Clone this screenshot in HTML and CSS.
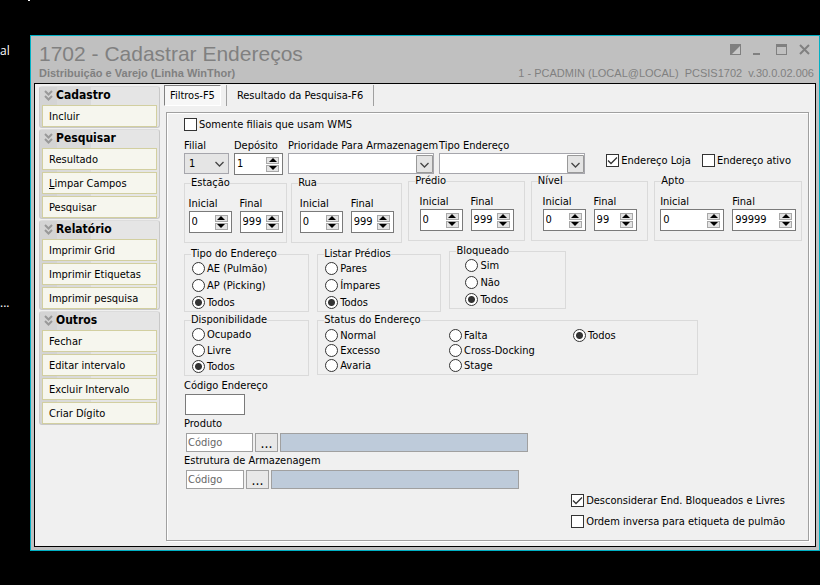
FILE: index.html
```html
<!DOCTYPE html>
<html lang="pt-BR">
<head>
  <meta charset="UTF-8" />
  <meta name="viewport" content="width=device-width, initial-scale=1.0"/>
  <title>1702 - Cadastrar Endereços</title>
  <link rel="stylesheet" href="styles.css">
</head>
<body>
  <!-- Desktop icon captions behind the window -->
  <span class="desktop-mark"></span>
  <span class="desktop-label label-top">al</span>
  <span class="desktop-label label-mid">...</span>

  <div class="window">
    <header class="titlebar">
      <div class="title-row">
        <h1>1702 - Cadastrar Endereços</h1>
        <div class="window-buttons">
          <button type="button" aria-label="Tema"><svg width="11" height="11" viewBox="0 0 11 11"><path d="M0 0H11V11H0Z" fill="#808080"/><path d="M10 2V10H2Z" fill="#c8c8c8"/></svg></button>
          <button type="button" aria-label="Minimizar"><svg width="11" height="11" viewBox="0 0 11 11"><path d="M0 9H7V11H0Z" fill="#808080"/></svg></button>
          <button type="button" aria-label="Maximizar"><svg width="11" height="11" viewBox="0 0 11 11"><path d="M0 0H11V11H0ZM1 3V10H10V3Z" fill="#808080" fill-rule="evenodd"/></svg></button>
          <button type="button" aria-label="Fechar janela"><svg width="11" height="11" viewBox="0 0 11 11"><path d="M1 1L10 10M10 1L1 10" stroke="#808080" stroke-width="2"/></svg></button>
        </div>
      </div>
      <div class="info-row">
        <strong>Distribuição e Varejo (Linha WinThor)</strong>
        <div class="session">
          <span>1 - PCADMIN (LOCAL@LOCAL)</span>
          <span>PCSIS1702</span>
          <span>v.30.0.02.006</span>
        </div>
      </div>
    </header>

    <div class="client">
      <nav class="sidebar">
        <section class="menu-group">
          <h2><svg width="9" height="11" viewBox="0 0 9 11"><path d="M1 1L4.500 4.500L8 1M1 6L4.500 9.500L8 6"/></svg>Cadastro</h2>
          <button type="button">Incluir</button>
        </section>
        <section class="menu-group">
          <h2><svg width="9" height="11" viewBox="0 0 9 11"><path d="M1 1L4.500 4.500L8 1M1 6L4.500 9.500L8 6"/></svg>Pesquisar</h2>
          <button type="button">Resultado</button>
          <button type="button"><u>L</u>impar Campos</button>
          <button type="button">Pesquisar</button>
        </section>
        <section class="menu-group">
          <h2><svg width="9" height="11" viewBox="0 0 9 11"><path d="M1 1L4.500 4.500L8 1M1 6L4.500 9.500L8 6"/></svg>Relatório</h2>
          <button type="button">Imprimir Grid</button>
          <button type="button">Imprimir Etiquetas</button>
          <button type="button">Imprimir pesquisa</button>
        </section>
        <section class="menu-group">
          <h2><svg width="9" height="11" viewBox="0 0 9 11"><path d="M1 1L4.500 4.500L8 1M1 6L4.500 9.500L8 6"/></svg>Outros</h2>
          <button type="button">Fechar</button>
          <button type="button">Editar intervalo</button>
          <button type="button">Excluir Intervalo</button>
          <button type="button">Criar Dígito</button>
        </section>
      </nav>

      <main class="content">
        <div class="tabs">
          <button type="button" class="tab active">Filtros-F5</button>
          <button type="button" class="tab">Resultado da Pesquisa-F6</button>
        </div>

        <form class="pane">
          <label class="option"><input type="checkbox">Somente filiais que usam WMS</label>

          <div class="top-row">
            <div class="field filial">
              <label for="filial">Filial</label>
              <select id="filial" class="flat"><option>1</option></select>
            </div>
            <div class="field deposito">
              <label for="deposito">Depósito</label>
              <div class="spin">
                <input type="text" id="deposito" value="1">
                <span class="arrows"><button type="button" class="up" aria-label="Aumentar"></button><button type="button" class="down" aria-label="Diminuir"></button></span>
              </div>
            </div>
            <div class="field combo">
              <label for="prioridade">Prioridade Para Armazenagem</label>
              <select id="prioridade"><option></option></select>
            </div>
            <div class="field combo">
              <label for="tipo">Tipo Endereço</label>
              <select id="tipo"><option></option></select>
            </div>
            <div class="top-checks">
              <label class="option"><input type="checkbox" checked>Endereço Loja</label>
              <label class="option"><input type="checkbox">Endereço ativo</label>
            </div>
          </div>

          <div class="ranges">
            <div class="range-set places">
              <fieldset class="range">
                <legend>Estação</legend>
                <div class="field">
                  <label for="estacao-ini">Inicial</label>
                  <div class="spin">
                    <input type="text" id="estacao-ini" value="0">
                    <span class="arrows"><button type="button" class="up" aria-label="Aumentar"></button><button type="button" class="down" aria-label="Diminuir"></button></span>
                  </div>
                </div>
                <div class="field">
                  <label for="estacao-fim">Final</label>
                  <div class="spin">
                    <input type="text" id="estacao-fim" value="999">
                    <span class="arrows"><button type="button" class="up" aria-label="Aumentar"></button><button type="button" class="down" aria-label="Diminuir"></button></span>
                  </div>
                </div>
              </fieldset>
              <fieldset class="range">
                <legend>Rua</legend>
                <div class="field">
                  <label for="rua-ini">Inicial</label>
                  <div class="spin">
                    <input type="text" id="rua-ini" value="0">
                    <span class="arrows"><button type="button" class="up" aria-label="Aumentar"></button><button type="button" class="down" aria-label="Diminuir"></button></span>
                  </div>
                </div>
                <div class="field">
                  <label for="rua-fim">Final</label>
                  <div class="spin">
                    <input type="text" id="rua-fim" value="999">
                    <span class="arrows"><button type="button" class="up" aria-label="Aumentar"></button><button type="button" class="down" aria-label="Diminuir"></button></span>
                  </div>
                </div>
              </fieldset>
            </div>
            <div class="range-set levels">
              <fieldset class="range">
                <legend>Prédio</legend>
                <div class="field">
                  <label for="predio-ini">Inicial</label>
                  <div class="spin">
                    <input type="text" id="predio-ini" value="0">
                    <span class="arrows"><button type="button" class="up" aria-label="Aumentar"></button><button type="button" class="down" aria-label="Diminuir"></button></span>
                  </div>
                </div>
                <div class="field">
                  <label for="predio-fim">Final</label>
                  <div class="spin">
                    <input type="text" id="predio-fim" value="999">
                    <span class="arrows"><button type="button" class="up" aria-label="Aumentar"></button><button type="button" class="down" aria-label="Diminuir"></button></span>
                  </div>
                </div>
              </fieldset>
              <fieldset class="range">
                <legend>Nível</legend>
                <div class="field">
                  <label for="nivel-ini">Inicial</label>
                  <div class="spin">
                    <input type="text" id="nivel-ini" value="0">
                    <span class="arrows"><button type="button" class="up" aria-label="Aumentar"></button><button type="button" class="down" aria-label="Diminuir"></button></span>
                  </div>
                </div>
                <div class="field">
                  <label for="nivel-fim">Final</label>
                  <div class="spin">
                    <input type="text" id="nivel-fim" value="99">
                    <span class="arrows"><button type="button" class="up" aria-label="Aumentar"></button><button type="button" class="down" aria-label="Diminuir"></button></span>
                  </div>
                </div>
              </fieldset>
              <fieldset class="range wide">
                <legend>Apto</legend>
                <div class="field">
                  <label for="apto-ini">Inicial</label>
                  <div class="spin">
                    <input type="text" id="apto-ini" value="0">
                    <span class="arrows"><button type="button" class="up" aria-label="Aumentar"></button><button type="button" class="down" aria-label="Diminuir"></button></span>
                  </div>
                </div>
                <div class="field">
                  <label for="apto-fim">Final</label>
                  <div class="spin">
                    <input type="text" id="apto-fim" value="99999">
                    <span class="arrows"><button type="button" class="up" aria-label="Aumentar"></button><button type="button" class="down" aria-label="Diminuir"></button></span>
                  </div>
                </div>
              </fieldset>
            </div>
          </div>

          <div class="kinds">
            <fieldset class="choices low">
              <legend>Tipo do Endereço</legend>
              <label class="option"><input type="radio" name="tipo-end">AE (Pulmão)</label>
              <label class="option"><input type="radio" name="tipo-end">AP (Picking)</label>
              <label class="option"><input type="radio" name="tipo-end" checked>Todos</label>
            </fieldset>
            <fieldset class="choices low">
              <legend>Listar Prédios</legend>
              <label class="option"><input type="radio" name="predios">Pares</label>
              <label class="option"><input type="radio" name="predios">Ímpares</label>
              <label class="option"><input type="radio" name="predios" checked>Todos</label>
            </fieldset>
            <fieldset class="choices indented">
              <legend>Bloqueado</legend>
              <label class="option"><input type="radio" name="bloqueado">Sim</label>
              <label class="option"><input type="radio" name="bloqueado">Não</label>
              <label class="option"><input type="radio" name="bloqueado" checked>Todos</label>
            </fieldset>
          </div>

          <div class="states">
            <fieldset class="choices tight">
              <legend>Disponibilidade</legend>
              <label class="option"><input type="radio" name="disp">Ocupado</label>
              <label class="option"><input type="radio" name="disp">Livre</label>
              <label class="option"><input type="radio" name="disp" checked>Todos</label>
            </fieldset>
            <fieldset class="choices status">
              <legend>Status do Endereço</legend>
              <label class="option"><input type="radio" name="status">Normal</label>
              <label class="option"><input type="radio" name="status">Excesso</label>
              <label class="option"><input type="radio" name="status">Avaria</label>
              <label class="option"><input type="radio" name="status">Falta</label>
              <label class="option"><input type="radio" name="status">Cross-Docking</label>
              <label class="option"><input type="radio" name="status">Stage</label>
              <label class="option"><input type="radio" name="status" checked>Todos</label>
            </fieldset>
          </div>

          <div class="lookups">
            <label for="codigo">Código Endereço</label>
            <input type="text" id="codigo" class="code">
            <label for="produto">Produto</label>
            <div class="lookup product">
              <input type="text" id="produto" placeholder="Código">
              <button type="button">...</button>
              <output for="produto"></output>
            </div>
            <label for="estrutura">Estrutura de Armazenagem</label>
            <div class="lookup structure">
              <input type="text" id="estrutura" placeholder="Código">
              <button type="button">...</button>
              <output for="estrutura"></output>
            </div>
          </div>

          <div class="bottom-checks">
            <label class="option"><input type="checkbox" checked>Desconsiderar End. Bloqueados e Livres</label>
            <label class="option"><input type="checkbox">Ordem inversa para etiqueta de pulmão</label>
          </div>
        </form>
      </main>
    </div>
  </div>
</body>
</html>
```

FILE: styles.css
```css
* {
  margin: 0;
  padding: 0;
  box-sizing: border-box;
}

body {
  display: flex;
  min-height: 100vh;
  padding: 35px 0 34px 30px;
  background-color: #000;
  color: #000;
  font-family: "DejaVu Sans Condensed", "Noto Sans", sans-serif;
  font-size: 11px;
  line-height: 14px;
}

button,
input,
select {
  font: inherit;
  color: inherit;
}

/* Desktop */
.desktop-label {
  position: absolute;
  left: 0;
  color: #fff;
  font-family: "Open Sans", sans-serif;
  font-size: 12px;
}

.label-top {
  top: 44px;
}

.label-mid {
  top: 296px;
}

.desktop-mark {
  position: absolute;
  left: 28px;
  top: 0;
  width: 2px;
  height: 1px;
  background-color: #fff;
}

/* Window */
.window {
  flex: 1;
  display: flex;
  flex-direction: column;
  padding: 0 3px 3px;
  background-color: #c0c0c0;
  border: 1px solid #00b0c4;
}

.titlebar {
  padding: 5px 2px 3px 5px;
  color: #808080;
  font-family: "Liberation Sans", Arial, sans-serif;
}

.title-row,
.info-row {
  display: flex;
  justify-content: space-between;
}

.title-row h1 {
  font-size: 21px;
  font-weight: normal;
  line-height: 25px;
}

.window-buttons {
  display: flex;
  gap: 12px;
  padding: 3px 4px 0 0;
}

.window-buttons button {
  height: 11px;
  background: none;
  border: none;
}

.window-buttons svg {
  display: block;
}

.session {
  display: flex;
  gap: 6px;
}

.client {
  flex: 1;
  display: flex;
  background-color: #f0f0f0;
  border: 1px solid #000;
}

/* Sidebar */
.sidebar {
  display: flex;
  flex-direction: column;
  gap: 1px;
  width: 125px;
  padding: 2px 0 2px 4px;
}

.menu-group {
  display: flex;
  flex-direction: column;
  gap: 2px;
  padding: 0 2px;
  background: linear-gradient(to right, #d4d4d4 17px, #dadada 17px, #dadada 51px, #e5e5e5 51px);
  border: 1px solid #c8c8c8;
  border-top-color: #dcdcdc;
  border-radius: 3px;
}

.menu-group h2 {
  display: flex;
  align-items: center;
  gap: 3px;
  height: 16px;
  padding-left: 2px;
  font-size: 12px;
  font-weight: bold;
}

.menu-group h2 svg {
  fill: none;
  stroke: #999;
  stroke-width: 2;
}

.menu-group button {
  height: 22px;
  padding: 1px 0 0 6px;
  background-color: #f6f6ee;
  border: 1px solid #d2cfa0;
  text-align: left;
}

/* Tabs */
.content {
  flex: 1;
  display: flex;
  flex-direction: column;
  padding: 1px 6px 5px 4px;
}

.tabs {
  display: flex;
  height: 21px;
}

.tab {
  padding: 1px 10px 0;
  background: none;
  border: none;
  border-right: 1px solid #a0a0a0;
}

.tab.active {
  padding: 1px 5px 0;
  margin-right: 5px;
  background-color: #f7f7f7;
  border: 1px solid #808080;
  border-right-color: #fff;
  border-bottom-color: #fff;
}

.tab.active + .tab {
  border-left: 1px solid #a0a0a0;
}

.pane {
  flex: 1;
  display: flex;
  flex-direction: column;
  margin: 6px 0 0 2px;
  padding: 5px 6px 12px 17px;
  border: 1px solid #a0a0a0;
  box-shadow: inset 1px 1px #fff, 1px 1px #fff;
}

/* Check boxes and radios */
.option {
  display: flex;
  align-items: center;
  gap: 2px;
  height: 13px;
  white-space: nowrap;
}

.option input {
  flex: none;
  appearance: none;
  width: 13px;
  height: 13px;
  background: #fff center no-repeat;
  border: 1px solid #333;
}

.option input[type="checkbox"]:checked {
  background-image: url("data:image/svg+xml,%3Csvg xmlns='http://www.w3.org/2000/svg' width='11' height='11'%3E%3Cpath d='M1 5.500L4 8.500L10 2.500' fill='none' stroke='%23333' stroke-width='1.300'/%3E%3C/svg%3E");
}

.option input[type="radio"] {
  border-radius: 50%;
}

.option input[type="radio"]:checked {
  background-image: radial-gradient(circle, #333 3px, transparent 4px);
}

/* Fields */
.field {
  display: flex;
  flex-direction: column;
}

.field label {
  white-space: nowrap;
}

select {
  appearance: none;
  height: 21px;
  padding-left: 4px;
  background: #fff url("data:image/svg+xml,%3Csvg xmlns='http://www.w3.org/2000/svg' width='17' height='18'%3E%3Cpath d='M.5.5H16.500V17.500H.5Z' fill='%23e4e4e4' stroke='%23999'/%3E%3Cpath d='M4.500 8L8.500 12L12.500 8' fill='none' stroke='%23444' stroke-width='1.300'/%3E%3C/svg%3E") right center no-repeat;
  border: 1px solid #a6a6ac;
  border-radius: 0;
}

select.flat {
  background: #e5e5e5 url("data:image/svg+xml,%3Csvg xmlns='http://www.w3.org/2000/svg' width='17' height='18'%3E%3Cpath d='M4.500 7L8.500 11L12.500 7' fill='none' stroke='%23444' stroke-width='1.300'/%3E%3C/svg%3E") right center no-repeat;
}

.spin {
  display: flex;
  align-items: center;
  height: 22px;
  padding: 0 3px 0 2px;
  background-color: #fff;
  border: 1px solid #7a7a7a;
}

.spin input {
  flex: 1;
  min-width: 0;
  width: 0;
  border: none;
  outline: none;
}

.arrows {
  display: flex;
  flex-direction: column;
  gap: 1px;
}

.arrows button {
  width: 13px;
  height: 7px;
  background: #e4e4e4 center no-repeat;
  border: 1px solid #a8a8a8;
}

.arrows .up {
  background-image: url("data:image/svg+xml,%3Csvg xmlns='http://www.w3.org/2000/svg' width='8' height='4'%3E%3Cpath d='M0 4L4 0L8 4Z'/%3E%3C/svg%3E");
}

.arrows .down {
  background-image: url("data:image/svg+xml,%3Csvg xmlns='http://www.w3.org/2000/svg' width='8' height='4'%3E%3Cpath d='M0 0L4 4L8 0Z'/%3E%3C/svg%3E");
}

.top-row {
  display: flex;
  gap: 5px;
  margin-top: 8px;
}

.filial {
  width: 45px;
}

.deposito {
  width: 49px;
}

.combo {
  width: 146px;
}

.top-checks {
  display: flex;
  gap: 11px;
  margin-left: auto;
  padding: 15px 11px 0 0;
}

/* Group boxes */
fieldset {
  min-width: 0;
  border: 1px solid #dadada;
}

legend {
  margin-left: 6px;
  line-height: 12px;
}

.ranges {
  display: grid;
  grid-template-columns: 218fr 393fr;
  gap: 6px;
}

.range-set {
  display: grid;
}

.places {
  grid-template-columns: 103fr 111fr;
  gap: 4px;
  padding-top: 2px;
}

.levels {
  grid-template-columns: 116fr 117fr 147fr;
  gap: 6px;
  padding-bottom: 2px;
}

.range {
  display: flex;
  justify-content: center;
  gap: 8px;
  padding: 8px 0 9px;
}

.range .spin {
  width: 43px;
}

.range.wide .spin {
  width: 64px;
}

.kinds,
.states {
  display: grid;
  gap: 8px;
  align-items: start;
}

.kinds {
  grid-template-columns: 125fr 124fr 116fr 228fr;
  margin-top: 2px;
}

.states {
  grid-template-columns: 125fr 380fr 96fr;
  margin-top: 2px;
}

.choices {
  display: flex;
  flex-direction: column;
  gap: 4px;
  padding: 2px 0 2px 7px;
}

.choices.low {
  margin-top: 3px;
}

.choices.tight {
  gap: 3px;
}

.choices.indented {
  padding-left: 15px;
}

.choices.indented legend {
  margin-left: -9px;
}

.choices legend {
  margin-left: -1px;
}

.status {
  display: grid;
  grid-template-rows: repeat(3, 13px);
  grid-auto-flow: column;
  grid-auto-columns: 1fr;
  gap: 2px 0;
  padding-top: 3px;
}

/* Code look-ups */
.lookups {
  display: flex;
  flex-direction: column;
  align-items: flex-start;
  margin-top: 3px;
}

.code {
  width: 60px;
  height: 21px;
  margin: 1px 1px 2px;
  border: 1px solid #7a7a7a;
}

.lookup {
  display: flex;
  gap: 2px;
  margin: 2px;
}

.lookup input,
.lookup button,
.lookup output {
  height: 19px;
  border: 1px solid #a0a0a0;
}

.lookup input {
  width: 67px;
  padding-left: 1px;
}

.lookup input::placeholder {
  color: #666;
  opacity: 1;
}

.lookup button {
  width: 23px;
  background-color: #e8e8e8;
  font-size: 14px;
}

.lookup output {
  width: 248px;
  background-color: #becbda;
}

.structure input {
  width: 58px;
}

.bottom-checks {
  display: flex;
  flex-direction: column;
  gap: 8px;
  align-self: flex-end;
  margin-top: auto;
  padding-right: 17px;
}
```
